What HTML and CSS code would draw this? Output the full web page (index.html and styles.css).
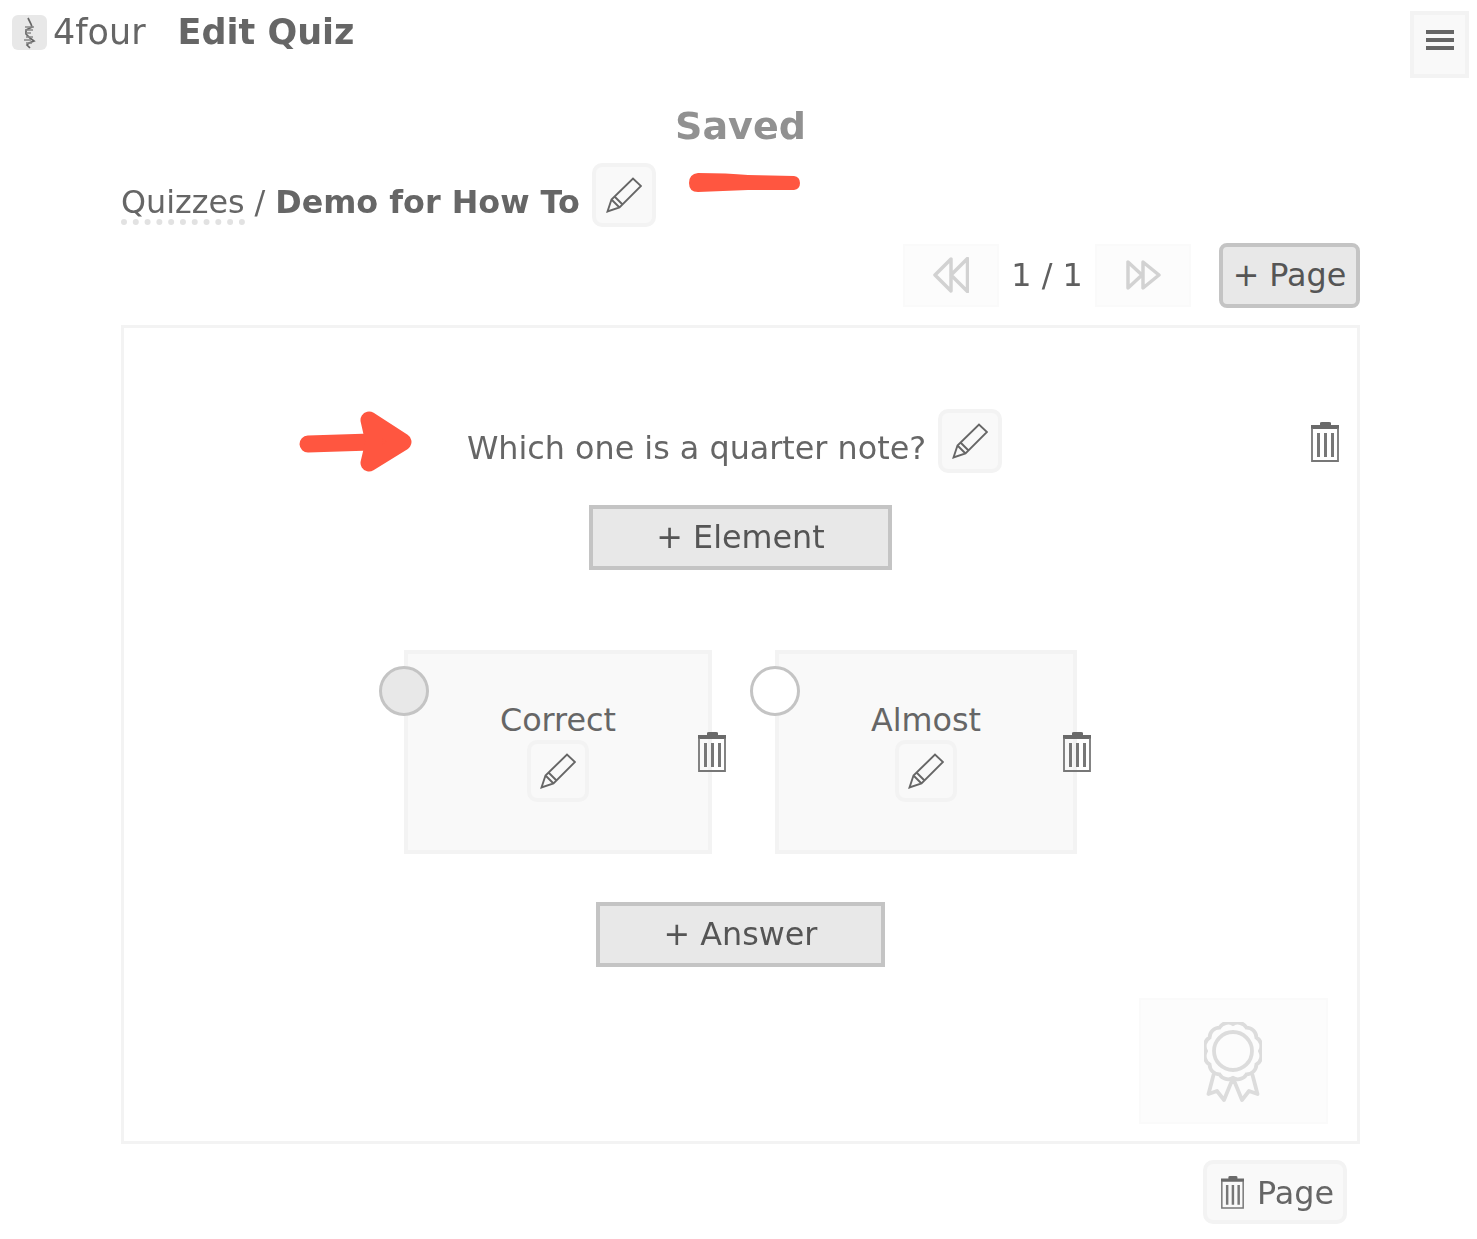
FILE: index.html
```html
<!DOCTYPE html>
<html lang="en">
<head>
    <meta charset="UTF-8">
    <meta name="viewport" content="width=device-width, initial-scale=1.0">
    <title>4four - Edit Quiz</title>
    <link rel="stylesheet" href="styles.css">
</head>
<body>
    <svg class="icon-defs" width="0" height="0" aria-hidden="true">
        <symbol id="pencil" viewBox="0 0 36 36">
            <path d="M1.500 34.500 L5.500 22.500 L27 1.500 L35 9 L13.500 30.500 Z M5.500 22.500 L13.500 30.500 M8.500 19.500 L16.500 27.500" fill="none" stroke="#666" stroke-width="1.900" stroke-linejoin="miter"/>
        </symbol>
        <symbol id="trash" viewBox="0 0 28 40">
            <path d="M9 3 V1 Q9 0 11 0 H18 Q20 0 20 1 V3 H28 V7 H0 V3 Z" fill="#6a6a6a"/>
            <path d="M1 6 V39 H27 V6" fill="none" stroke="#777" stroke-width="1.800"/>
            <path d="M7.500 11 V35 M14.500 11 V35 M21.500 11 V35" fill="none" stroke="#777" stroke-width="3"/>
        </symbol>
    </svg>

    <div class="page">
        <header class="top-bar">
            <div class="brand">
                <span class="logo">
                    <svg width="35" height="35" viewBox="0 0 35 35">
                        <path d="M16 3 L19 9 L20 12 L14 15 L14 19 L18 23 L22 26 L17 28 L15 30 L18 33" fill="none" stroke="#666" stroke-width="1.700"/>
                        <path d="M13 12 H22 M13 15 H21 M14 18 H19 M14 22 H21 M12 25 H19 M14 28 H20" fill="none" stroke="#888" stroke-width="1.700"/>
                    </svg>
                </span>
                <span class="brand-name">4four</span>
                <h1>Edit Quiz</h1>
            </div>
            <button class="menu-btn" aria-label="Menu">
                <span></span><span></span><span></span>
            </button>
        </header>

        <main class="quiz-editor">
            <div class="save-status">Saved</div>

            <div class="breadcrumb">
                <a class="crumb-link">Quizzes</a>
                <span class="crumb-sep">/</span>
                <b class="quiz-name">Demo for How To</b>
                <button class="edit-btn"><svg width="36" height="36"><use href="#pencil"/></svg></button>
            </div>

            <div class="pager">
                <button class="nav-btn">
                    <svg width="36" height="36" viewBox="0 0 36 36"><path d="M2 18 L18 2 V34 Z M18 18 L34.500 1.500 V34.500 Z" fill="none" stroke="#d2d2d2" stroke-width="3.500" stroke-linejoin="round" stroke-linecap="round"/></svg>
                </button>
                <span class="page-count">1 / 1</span>
                <button class="nav-btn">
                    <svg width="36" height="30" viewBox="0 0 36 30"><path d="M3 2 V28 L17 15 Z M18 2 L34 15 L18 28 Z" fill="none" stroke="#d2d2d2" stroke-width="3.500" stroke-linejoin="round" stroke-linecap="round"/></svg>
                </button>
                <button class="add-btn add-page">+ Page</button>
            </div>

            <section class="page-card">
                <div class="question-row">
                    <div class="question">
                        <span>Which one is a quarter note?</span>
                        <button class="edit-btn"><svg width="36" height="36"><use href="#pencil"/></svg></button>
                    </div>
                    <svg class="question-trash" width="28" height="40"><use href="#trash"/></svg>
                </div>

                <button class="add-btn add-element">+ Element</button>

                <div class="answers">
                    <div class="answer">
                        <span class="radio radio-on"></span>
                        <div class="answer-label">Correct</div>
                        <button class="edit-btn edit-small"><svg width="36" height="36"><use href="#pencil"/></svg></button>
                        <svg class="answer-trash" width="28" height="40"><use href="#trash"/></svg>
                    </div>
                    <div class="answer">
                        <span class="radio"></span>
                        <div class="answer-label">Almost</div>
                        <button class="edit-btn edit-small"><svg width="36" height="36"><use href="#pencil"/></svg></button>
                        <svg class="answer-trash" width="28" height="40"><use href="#trash"/></svg>
                    </div>
                </div>

                <button class="add-btn add-answer">+ Answer</button>

                <div class="badge-row">
                    <div class="badge-box">
                        <svg width="58" height="80" viewBox="0 0 58 80">
                            <path d="M56 29 A10 10 0 0 1 52.400 42.500 A10 10 0 0 1 42.500 52.400 A10 10 0 0 1 29 56 A10 10 0 0 1 15.500 52.400 A10 10 0 0 1 5.600 42.500 A10 10 0 0 1 2 29 A10 10 0 0 1 5.600 15.500 A10 10 0 0 1 15.500 5.600 A10 10 0 0 1 29 2 A10 10 0 0 1 42.500 5.600 A10 10 0 0 1 52.400 15.500 A10 10 0 0 1 56 29 Z" fill="none" stroke="#dcdcdc" stroke-width="3.800"/>
                            <circle cx="29" cy="29" r="19" fill="none" stroke="#dcdcdc" stroke-width="3.800"/>
                            <path d="M9.500 53 L4.500 72 L13 69 L20 78 L29 56 L38 78 L45 69 L53.500 72 L48.500 53" fill="none" stroke="#dcdcdc" stroke-width="3.800" stroke-linejoin="round" stroke-linecap="round"/>
                        </svg>
                    </div>
                </div>
            </section>

            <div class="page-actions">
                <button class="delete-page"><svg width="23" height="33"><use href="#trash"/></svg>Page</button>
            </div>
        </main>
    </div>

    <!-- hand drawn marks on top of the screenshot -->
    <svg class="scribble scribble-line" width="113" height="20" viewBox="0 0 113 20">
        <path d="M10 0 Q40 0 60 2 L106 3 Q112 4 112 10 Q112 16 106 17 L60 17 Q35 18 10 19 Q1 19 1 10 Q1 1 10 0 Z" fill="#ff5640"/>
    </svg>
    <svg class="scribble scribble-arrow" width="116" height="64" viewBox="0 0 116 64">
        <path d="M9 33 L72 31" fill="none" stroke="#ff5640" stroke-width="17" stroke-linecap="round"/>
        <path d="M70 9 L104 31 L70 52 L75 31 Z" fill="#ff5640" stroke="#ff5640" stroke-width="17" stroke-linecap="round" stroke-linejoin="round"/>
    </svg>
</body>
</html>
```

FILE: styles.css
```css
* {
    box-sizing: border-box;
}

body {
    margin: 0;
    font-family: "DejaVu Sans", sans-serif;
    font-size: 31.8px;
    color: #666;
    background: #fff;
}

button {
    font-family: inherit;
    font-size: 31.8px;
    color: #555;
    cursor: pointer;
}

.icon-defs {
    position: absolute;
}

.page {
    opacity: 0.999;
}

.top-bar {
    display: flex;
    justify-content: space-between;
    align-items: flex-start;
    padding: 11px 8px 0 12px;
}

.brand {
    display: flex;
    align-items: center;
    height: 42px;
}

.logo {
    display: flex;
    width: 35px;
    height: 35px;
    margin-right: 6px;
    background: #e8e8e8;
    border-radius: 6px;
}

.brand-name {
    font-size: 35px;
    margin-right: 32px;
}

h1 {
    margin: 0;
    font-size: 35px;
    font-weight: bold;
}

.menu-btn {
    display: flex;
    flex-direction: column;
    justify-content: center;
    align-items: center;
    gap: 4px;
    width: 59px;
    height: 67px;
    padding: 0 0 9px;
    background: #f9f9f9;
    border: 4px solid #f3f3f3;
}

.menu-btn span {
    width: 28px;
    height: 4px;
    background: #666;
}

.quiz-editor {
    width: 1239px;
    margin-left: 121px;
}

.save-status {
    margin-top: 26px;
    text-align: center;
    font-size: 38px;
    line-height: 44px;
    font-weight: bold;
    color: #919191;
}

.breadcrumb {
    display: flex;
    align-items: center;
    gap: 10px;
    height: 64px;
    margin-top: 15px;
}

.crumb-link {
    height: 42px;
    margin-top: 18px;
    line-height: 38px;
    border-bottom: 6px dotted #e2e2e2;
}

.crumb-sep,
.quiz-name {
    margin-top: 12px;
}

.edit-btn {
    display: flex;
    align-items: center;
    justify-content: center;
    width: 64px;
    height: 64px;
    margin-left: 2px;
    padding: 0;
    background: #f9f9f9;
    border: 4px solid #f3f3f3;
    border-radius: 10px;
}

.pager {
    display: flex;
    justify-content: flex-end;
    align-items: center;
    margin-top: 16px;
    height: 64px;
}

.nav-btn {
    display: flex;
    align-items: center;
    justify-content: center;
    width: 96px;
    height: 63px;
    padding: 0;
    background: #fcfcfc;
    border: 2px solid #fafafa;
}

.page-count {
    width: 96px;
    padding-bottom: 2px;
    text-align: center;
    color: #5f5f5f;
}

.add-btn {
    background: #e8e8e8;
    border: 4px solid #c4c4c4;
    padding: 0 0 2px;
    height: 65px;
}

.add-page {
    width: 141px;
    margin-left: 28px;
    border-radius: 8px;
}

.page-card {
    position: relative;
    height: 819px;
    margin-top: 18px;
    padding-top: 82px;
    border: 3px solid #f3f3f3;
    text-align: center;
}

.question-row {
    display: grid;
    grid-template-columns: 1fr auto 1fr;
    align-items: center;
    height: 64px;
    padding: 0 18px 0 6px;
}

.question {
    grid-column: 2;
    display: flex;
    align-items: center;
    gap: 10px;
    margin-top: -2px;
}

.question span {
    margin-top: 12px;
}

.question-trash {
    justify-self: end;
}

.add-element {
    display: block;
    width: 303px;
    margin: 31px auto 0;
}

.answers {
    display: flex;
    justify-content: center;
    gap: 63px;
    margin-top: 80px;
}

.answer {
    position: relative;
    height: 204px;
    padding: 46px 92px 0;
    background: #f9f9f9;
    border: 4px solid #f3f3f3;
}

.answer-label {
    line-height: 40px;
}

.edit-small {
    width: 62px;
    height: 62px;
    margin: 0 auto;
}

.radio {
    position: absolute;
    top: 12px;
    left: -29px;
    width: 50px;
    height: 50px;
    background: #fff;
    border: 3px solid #c4c4c4;
    border-radius: 50%;
}

.radio-on {
    background: #e8e8e8;
}

.answer-trash {
    position: absolute;
    top: 78px;
    right: -18px;
}

.add-answer {
    display: block;
    width: 289px;
    margin: 48px auto 0;
}

.badge-row {
    display: flex;
    justify-content: flex-end;
    margin-top: 31px;
    padding-right: 29px;
}

.badge-box {
    display: flex;
    align-items: center;
    justify-content: center;
    width: 189px;
    height: 126px;
    padding: 2px 2px 0 0;
    background: #fcfcfc;
    border: 2px solid #fafafa;
}

.page-actions {
    display: flex;
    justify-content: flex-end;
    margin-top: 16px;
    padding-right: 13px;
}

.delete-page {
    display: flex;
    align-items: center;
    gap: 13px;
    width: 144px;
    height: 64px;
    padding: 0 0 0 14px;
    color: #666;
    background: #f9f9f9;
    border: 4px solid #f3f3f3;
    border-radius: 10px;
}

.scribble {
    position: absolute;
}

.scribble-line {
    top: 173px;
    left: 688px;
}

.scribble-arrow {
    top: 411px;
    left: 299px;
}
```
